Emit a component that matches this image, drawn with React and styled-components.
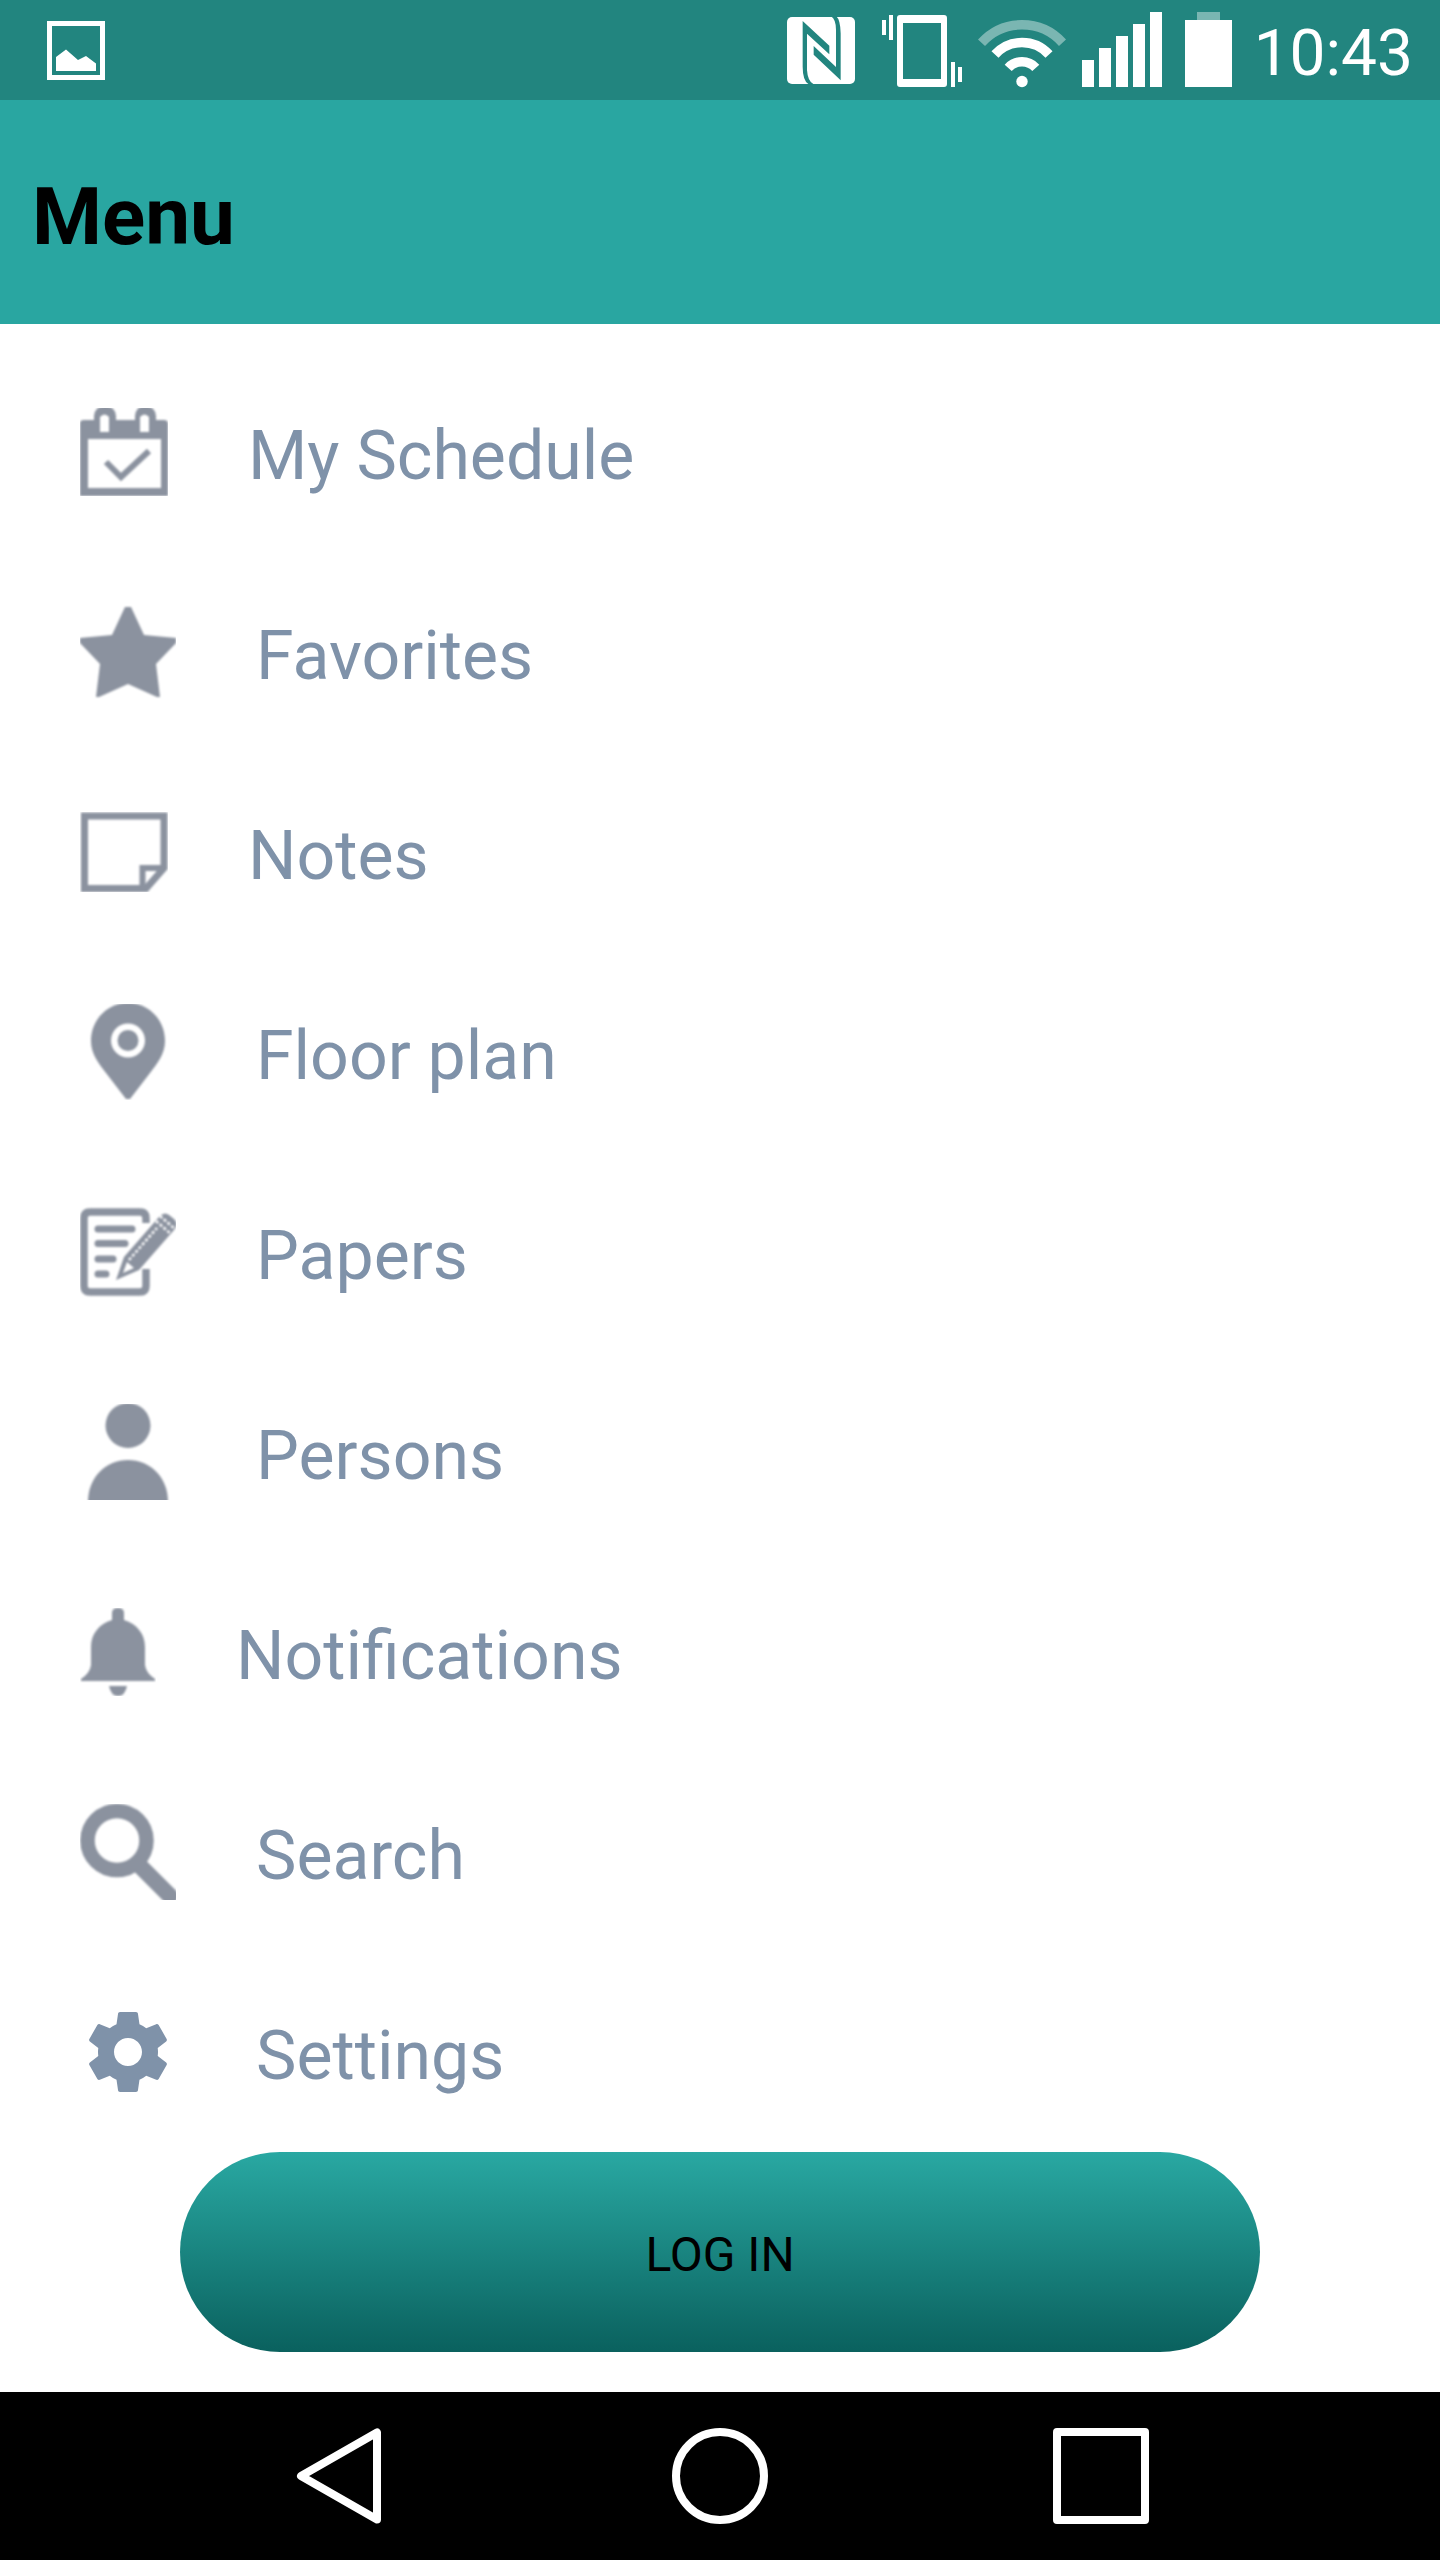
import React from "react";
import styled, { createGlobalStyle } from "styled-components";

const GlobalStyle = createGlobalStyle`
  * { box-sizing: border-box; }
  body { margin: 0; background: #fff; font-family: Roboto, "Noto Sans", sans-serif; }
`;

const Screen = styled.div`
  display: flex;
  flex-direction: column;
  min-height: 100vh;
  background: #fff;
`;

const StatusBar = styled.div`
  display: flex;
  align-items: center;
  justify-content: space-between;
  height: 100px;
  padding: 0 27px 0 47px;
  background: #22857f;
  color: #fff;
`;

const StatusGroup = styled.div`
  display: flex;
  align-items: center;
  gap: 16px;
`;

const StatusIcon = styled.svg`
  display: block;
  height: 100px;
  width: ${(p) => p.$width}px;
  fill: #fff;
`;

const Clock = styled.time`
  padding-top: 8px;
  font-size: 64px;
  line-height: 76px;
`;

const Header = styled.header`
  padding: 70px 32px 60px;
  background: #29a6a1;
`;

const Title = styled.h1`
  margin: 0;
  font-size: 80px;
  line-height: 94px;
  font-weight: 700;
  color: #000;
`;

const MenuList = styled.ul`
  flex: 1;
  margin: 0;
  padding: 28px 0 0;
  list-style: none;
`;

const MenuLink = styled.a`
  display: flex;
  align-items: center;
  gap: 80px;
  height: 200px;
  padding: 0 80px;
  color: #7f92a9;
  text-decoration: none;
`;

const MenuIcon = styled.svg`
  flex: none;
  display: block;
  overflow: hidden;
  color: ${(p) => (p.$crisp ? "#7f92a9" : "#8b929f")};
  fill: currentColor;

  g {
    filter: ${(p) => (p.$crisp ? "none" : "blur(1px)")};
  }
`;

const MenuLabel = styled.span`
  padding-top: 8px;
  font-size: 68px;
  line-height: 80px;
`;

const Actions = styled.div`
  padding: 0 12.5% 40px;
`;

const LoginButton = styled.button`
  display: block;
  width: 100%;
  height: 200px;
  padding: 6px 0 0;
  border: 0;
  border-radius: 100px;
  background: linear-gradient(#29a8a2, #0a615e);
  color: #000;
  font-family: inherit;
  font-size: 48px;
  line-height: 56px;
`;

const NavBar = styled.nav`
  display: flex;
  height: 168px;
  padding: 0 148px;
  background: #000;
`;

const NavButton = styled.button`
  flex: 1;
  display: flex;
  align-items: center;
  justify-content: center;
  padding: 0;
  border: 0;
  background: none;

  svg {
    fill: none;
    stroke: #fff;
    stroke-width: 8;
    stroke-linejoin: round;
  }
`;

const strokeProps = { fill: "none", stroke: "currentColor" };

const ITEMS = [
  {
    label: "My Schedule",
    w: 88,
    h: 88,
    art: (
      <>
        <path
          fillRule="evenodd"
          d="M0 15 Q0 12 4 12 H14 V8 Q15 -2 25 -2 Q35 -2 36 8 V12 H55 V8 Q56 -2 65 -2 Q75 -2 76 8 V12 H84 Q88 12 88 16 V88 H0 Z M8 31 V80 H81 V31 Z M20 9 V24 H29 V9 Q24.5 4 20 9 Z M60 9 V24 H69 V9 Q64.5 4 60 9 Z"
        />
        <path {...strokeProps} strokeWidth="6" d="M26 54 L41 69 L69 43" />
      </>
    ),
  },
  {
    label: "Favorites",
    w: 96,
    h: 96,
    art: <path d="M45 3 H51 L64 31 L96 34 V39 L76 60 L80 93 H77 L48 80 L19 93 H16 L20 60 L0 39 V34 L32 31 Z" />,
  },
  {
    label: "Notes",
    w: 88,
    h: 80,
    art: (
      <>
        <path {...strokeProps} strokeWidth="7" d="M4.5 4 H84 V56 L66 76.5 H4.5 Z" />
        <path {...strokeProps} strokeWidth="6" d="M62.5 76 V56 H84" />
      </>
    ),
  },
  {
    label: "Floor plan",
    w: 96,
    h: 96,
    art: (
      <>
        <path
          fillRule="evenodd"
          d="M48 -1 C69 -1 85 16 85 37 C85 50 77 60 70 69 L50 95 H46 L26 69 C19 60 11 50 11 37 C11 16 27 -1 48 -1 Z M48 19.5 A17 17 0 1 0 48 53.5 A17 17 0 1 0 48 19.5 Z"
        />
        <circle cx="48" cy="36.5" r="10.5" />
      </>
    ),
  },
  {
    label: "Papers",
    w: 96,
    h: 96,
    art: (
      <>
        <path
          {...strokeProps}
          strokeWidth="7.5"
          d="M66 19 V14 Q66 8 60 8 H10 Q4 8 4 14 V82 Q4 88 10 88 H60 Q66 88 66 82 V65"
        />
        <path
          {...strokeProps}
          strokeWidth="7"
          strokeLinecap="round"
          d="M18 25 H52 M18 39.5 H45 M18 55 H33 M18 70 H26"
        />
        <path d="M36 76 L44 53 L79 13 Q84 7 89 11 L94 15 Q99 20 94 26 L59 66 Z" />
        <path {...strokeProps} stroke="#fff" strokeWidth="2.5" d="M49 56 L77 24 M76 17 L91 30 M80 12 L95 25" strokeDasharray="3 2" />
        <path fill="#fff" d="M43 69 L47 58 L54 64 Z" />
      </>
    ),
  },
  {
    label: "Persons",
    w: 96,
    h: 96,
    art: (
      <>
        <circle cx="48" cy="21.5" r="22.5" />
        <path d="M8 98 C8 73 26 56 48 56 C70 56 88 73 88 98 Z" />
      </>
    ),
  },
  {
    label: "Notifications",
    w: 76,
    h: 88,
    art: (
      <>
        <path d="M32 12 V5 Q32 0 38 0 Q44 0 44 5 V12 C57 16 65 26 65 39 V57 Q66 65 75 71 V73 H1 V71 Q10 65 11 57 V39 C11 26 19 16 32 12 Z" />
        <path d="M29 78 H47 Q45 88 38 88 Q31 88 29 78 Z" />
      </>
    ),
  },
  {
    label: "Search",
    w: 96,
    h: 96,
    art: (
      <>
        <circle {...strokeProps} strokeWidth="14.5" cx="37" cy="36.5" r="29.5" />
        <path {...strokeProps} strokeWidth="16" d="M59 61 L90 92" strokeLinecap="round" />
      </>
    ),
  },
  {
    label: "Settings",
    w: 96,
    h: 96,
    crisp: true,
    art: (
      <path
        transform="scale(4)"
        d="M19.43 12.98c.04-.32.07-.64.07-.98s-.03-.66-.07-.98l2.11-1.65c.19-.15.24-.42.12-.64l-2-3.46c-.12-.22-.39-.3-.61-.22l-2.49 1c-.52-.4-1.08-.73-1.69-.98l-.38-2.65C14.46 2.18 14.25 2 14 2h-4c-.25 0-.46.18-.49.42l-.38 2.65c-.61.25-1.17.59-1.69.98l-2.49-1c-.23-.09-.49 0-.61.22l-2 3.46c-.13.22-.07.49.12.64l2.11 1.65c-.04.32-.07.65-.07.98s.03.66.07.98l-2.11 1.65c-.19.15-.24.42-.12.64l2 3.46c.12.22.39.3.61.22l2.49-1c.52.4 1.08.73 1.69.98l.38 2.65c.03.24.24.42.49.42h4c.25 0 .46-.18.49-.42l.38-2.65c.61-.25 1.17-.59 1.69-.98l2.49 1c.23.09.49 0 .61-.22l2-3.46c.12-.22.07-.49-.12-.64l-2.11-1.65zM12 15.5c-1.93 0-3.5-1.57-3.5-3.5s1.57-3.5 3.5-3.5 3.5 1.57 3.5 3.5-1.57 3.5-3.5 3.5z"
      />
    ),
  },
];

function PictureIcon() {
  return (
    <StatusIcon $width={58} viewBox="47 0 58 100" aria-hidden="true">
      <path fillRule="evenodd" d="M47 21 H105 V80 H47 Z M52 26 V75 H100 V26 Z" />
      <path d="M56 71 V57 L66 49.5 L78 60 L86 56 L96 63.5 V71 Z" />
    </StatusIcon>
  );
}

function NfcIcon() {
  return (
    <StatusIcon $width={79} viewBox="788 0 79 100" aria-hidden="true">
      <rect x="788" y="17" width="68" height="67" rx="5" />
      <g fill="#22857f" transform="translate(780 10) scale(0.33333)">
        <path d="M89 223 Q71 212 71 170 V33 L151 107 V133 L84 71 V180 Q86 214 104 223 Z" />
        <path d="M156 19 Q171 28 171 60 V171 L104 108 V134 L185 211 V70 Q184 30 172 19 Z" />
      </g>
    </StatusIcon>
  );
}

function VibrateIcon() {
  return (
    <StatusIcon $width={80} viewBox="883 0 80 100" aria-hidden="true">
      <path
        fillRule="evenodd"
        d="M901 15 H945 Q948 15 948 18 V84 Q948 87 945 87 H901 Q898 87 898 84 V18 Q898 15 901 15 Z M904 23 V79 H942 V23 Z"
      />
      <path d="M883 20 H887 V35 H883 Z M890 15 H894 V40 H890 Z M952 62 H956 V87 H952 Z M959 67 H963 V82 H959 Z" />
    </StatusIcon>
  );
}

function WifiIcon() {
  return (
    <StatusIcon $width={88} viewBox="978 0 88 100" aria-hidden="true">
      <g fill="none" stroke="#fff" strokeWidth="9.5">
        <path opacity="0.4" d="M981.5 42.7 A54.7 54.7 0 0 1 1062.5 42.7" />
        <path d="M995 54.5 A36.5 36.5 0 0 1 1049 54.5" />
        <path d="M1008.2 67.9 A18.7 18.7 0 0 1 1035.8 67.9" />
      </g>
      <circle cx="1022" cy="81.5" r="5.7" />
    </StatusIcon>
  );
}

function SignalIcon() {
  return (
    <StatusIcon $width={87} viewBox="1082 0 87 100" aria-hidden="true">
      {[60, 48, 36, 24, 12].map((top, i) => (
        <rect key={top} x={1082 + i * 17} y={top} width="12" height={87 - top} />
      ))}
    </StatusIcon>
  );
}

function BatteryIcon() {
  return (
    <StatusIcon $width={53} viewBox="1185 0 53 100" aria-hidden="true">
      <rect x="1197" y="12" width="23" height="8" opacity="0.4" />
      <rect x="1185" y="20" width="47" height="67" />
    </StatusIcon>
  );
}

export default function App() {
  return (
    <Screen>
      <GlobalStyle />
      <StatusBar>
        <PictureIcon />
        <StatusGroup>
          <NfcIcon />
          <VibrateIcon />
          <WifiIcon />
          <SignalIcon />
          <BatteryIcon />
          <Clock>10:43</Clock>
        </StatusGroup>
      </StatusBar>
      <Header>
        <Title>Menu</Title>
      </Header>
      <MenuList>
        {ITEMS.map(({ label, w, h, art, crisp }) => (
          <li key={label}>
            <MenuLink href="#">
              <MenuIcon $crisp={crisp} width={w} height={h} viewBox={`0 0 ${w} ${h}`} aria-hidden="true">
                <g>{art}</g>
              </MenuIcon>
              <MenuLabel>{label}</MenuLabel>
            </MenuLink>
          </li>
        ))}
      </MenuList>
      <Actions>
        <LoginButton type="button">LOG IN</LoginButton>
      </Actions>
      <NavBar>
        <NavButton type="button" aria-label="Back">
          <svg width="96" height="96" viewBox="0 0 96 96">
            <path d="M86 4.5 V91.5 L10 48 Z" />
          </svg>
        </NavButton>
        <NavButton type="button" aria-label="Home">
          <svg width="96" height="96" viewBox="0 0 96 96">
            <circle cx="48" cy="48" r="44" />
          </svg>
        </NavButton>
        <NavButton type="button" aria-label="Recent apps">
          <svg width="96" height="96" viewBox="0 0 96 96">
            <rect x="4" y="4" width="88" height="88" />
          </svg>
        </NavButton>
      </NavBar>
    </Screen>
  );
}
